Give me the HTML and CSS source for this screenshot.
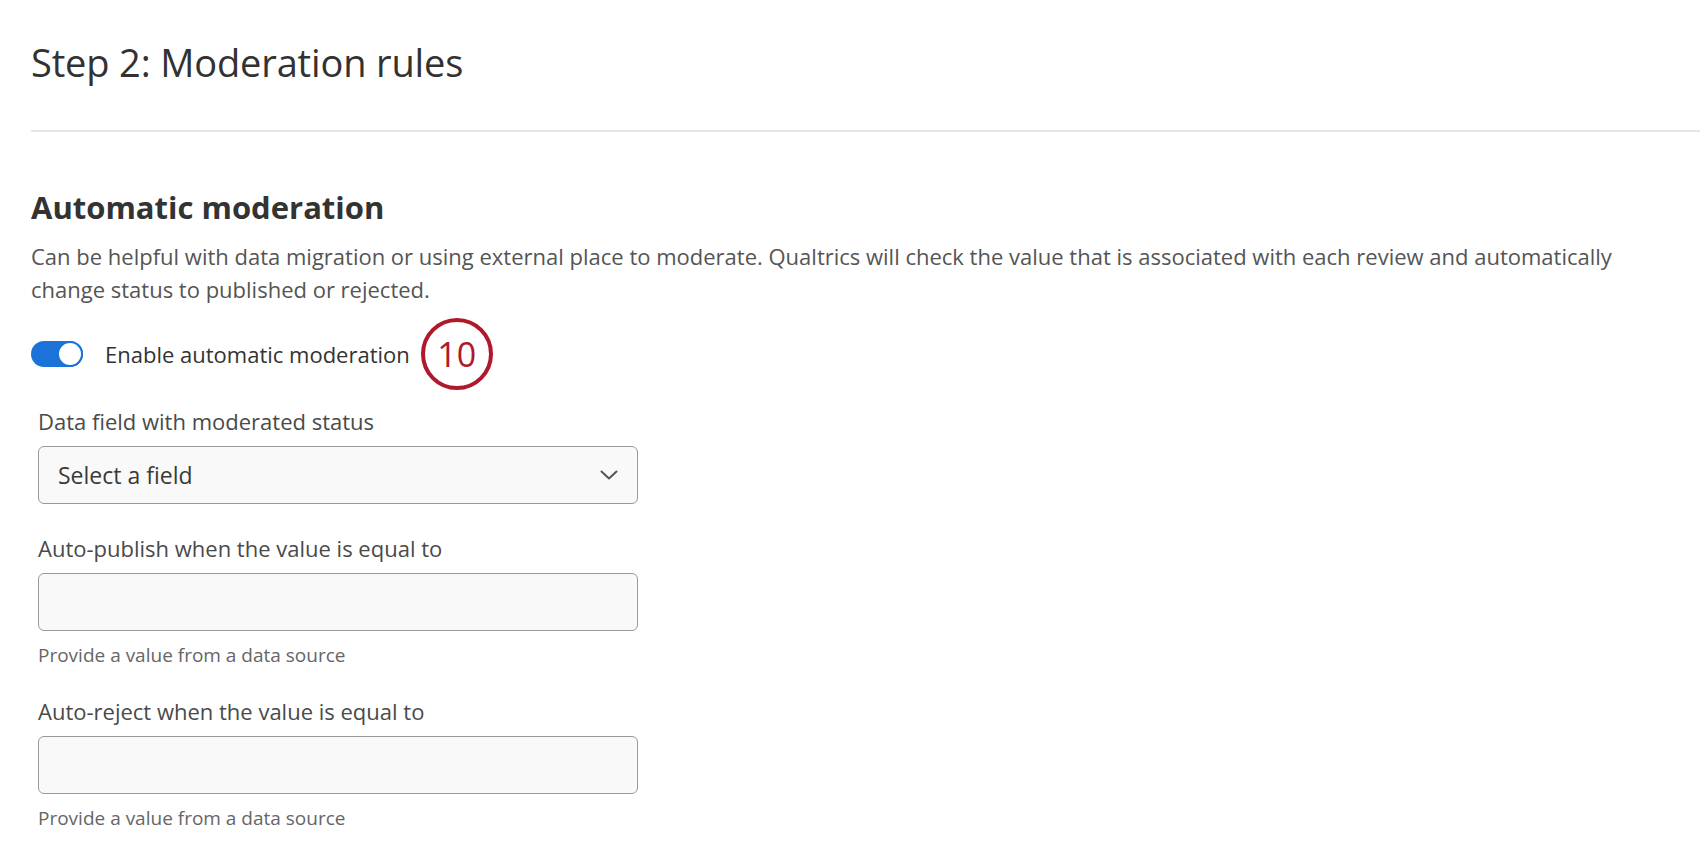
FILE: index.html
```html
<!DOCTYPE html>
<html lang="en">
<head>
    <meta charset="UTF-8">
    <meta name="viewport" content="width=device-width, initial-scale=1.0">
    <title>Step 2: Moderation rules</title>
    <link rel="stylesheet" href="styles.css">
</head>
<body>
    <div class="page">
        <h1 class="step-title">Step 2: Moderation rules</h1>
        <hr class="divider">

        <section class="section">
            <h2>Automatic moderation</h2>
            <p class="description">Can be helpful with data migration or using external place to moderate. Qualtrics will check the value that is associated with each review and automatically change status to published or rejected.</p>

            <div class="toggle-row">
                <span class="toggle"><span class="knob"></span></span>
                <span class="toggle-label">Enable automatic moderation</span>
                <span class="callout">10</span>
            </div>

            <div class="field">
                <label>Data field with moderated status</label>
                <div class="select">
                    <span>Select a field</span>
                    <svg class="chevron" width="18" height="10" viewBox="0 0 18 10">
                        <path d="M1.5 1.5 L9 8.5 L16.5 1.5" fill="none" stroke="#555" stroke-width="2" stroke-linecap="round" stroke-linejoin="round"/>
                    </svg>
                </div>
            </div>

            <div class="field">
                <label>Auto-publish when the value is equal to</label>
                <input type="text">
                <div class="helper">Provide a value from a data source</div>
            </div>

            <div class="field">
                <label>Auto-reject when the value is equal to</label>
                <input type="text">
                <div class="helper">Provide a value from a data source</div>
            </div>
        </section>
    </div>
</body>
</html>
```

FILE: styles.css
```css
body {
    margin: 0;
    font-family: "Open Sans", "Noto Sans", sans-serif;
    background-color: white;
    color: #333;
}
.page {
    padding-left: 31px;
}
.step-title {
    margin: 0;
    padding-top: 38px;
    font-size: 38px;
    line-height: 48px;
    font-weight: 400;
    letter-spacing: -0.15px;
    color: #323232;
}
.divider {
    margin: 44px 0 0 0;
    border: none;
    height: 2px;
    background-color: #e6e6e6;
}
.section {
    padding-top: 57px;
}
h2 {
    margin: 0;
    font-size: 31px;
    line-height: 36px;
    font-weight: 700;
    color: #333;
}
.description {
    margin: 15px 0 0 0;
    max-width: 1640px;
    font-size: 22px;
    line-height: 33px;
    color: #555;
}
.toggle-row {
    display: flex;
    align-items: center;
    height: 40px;
    margin-top: 28px;
}
.toggle {
    display: flex;
    justify-content: flex-end;
    width: 52px;
    height: 26px;
    border-radius: 13px;
    background-color: #1b73da;
}
.knob {
    width: 22px;
    height: 22px;
    border: 2px solid #1b73da;
    border-radius: 50%;
    background-color: white;
}
.toggle-label {
    margin-left: 22px;
    font-size: 22px;
    color: #333;
}
.callout {
    display: flex;
    justify-content: center;
    align-items: center;
    width: 64px;
    height: 64px;
    margin-left: 11px;
    border: 4px solid #b0182b;
    border-radius: 50%;
    font-size: 34px;
    color: #b0182b;
}
.field {
    margin-top: 32px;
}
.field + .field {
    margin-top: 29px;
}
label {
    display: block;
    font-size: 22px;
    line-height: 30px;
    color: #4a4a4a;
}
.select, input {
    box-sizing: border-box;
    width: 600px;
    height: 58px;
    margin-top: 10px;
    margin-left: 7px;
    border: 1px solid #9a9a9a;
    border-radius: 6px;
    background-color: #f9f9f9;
}
label, .helper {
    margin-left: 7px;
}
input {
    display: block;
    padding: 0 20px;
    font-family: inherit;
    font-size: 22px;
}
.select {
    display: flex;
    align-items: center;
    justify-content: space-between;
    padding: 0 19px 0 19px;
    font-size: 23px;
    color: #3a3a3a;
}
.helper {
    margin-top: 12px;
    font-size: 19px;
    line-height: 24px;
    color: #666;
}
```
